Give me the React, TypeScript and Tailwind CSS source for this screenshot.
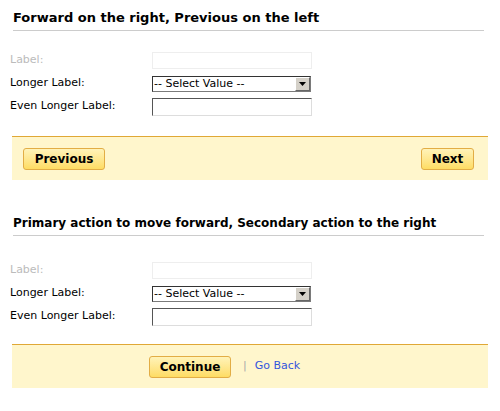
const SelectBox = () => (
  <div className="flex h-[16px] w-[159px] items-stretch border border-[#7a7a7a] border-l-[#333] border-t-[#333] bg-white">
    <span className="flex-1 pl-[1px] text-[11px] leading-[14px] text-black">-- Select Value --</span>
    <span className="flex w-[15px] items-center justify-center border border-[#fff] border-b-[#666] border-r-[#666] bg-[#d4d0c8]">
      <svg width="7" height="4" viewBox="0 0 7 4">
        <path d="M0 0h7L3.5 4z" fill="#000" />
      </svg>
    </span>
  </div>
);

const FormRows = ({ top }: { top: string }) => (
  <div className={`${top} flex flex-col`}>
    <div className="flex h-[23px] items-center">
      <span className="w-[152px] pl-[10px] text-[11px] text-[#bbb]">Label:</span>
      <div className="h-[17px] w-[160px] border border-[#eee] bg-white" />
    </div>
    <div className="flex h-[23px] items-center">
      <span className="w-[152px] pl-[10px] text-[11px] text-black">Longer Label:</span>
      <SelectBox />
    </div>
    <div className="flex h-[23px] items-center">
      <span className="w-[152px] pl-[10px] text-[11px] text-black">Even Longer Label:</span>
      <div className="h-[18px] w-[160px] border border-[#ddd] border-l-[#555] border-t-[#555] bg-white" />
    </div>
  </div>
);

const Btn = ({ children, w }: { children: string; w: string }) => (
  <button
    className={`${w} h-[22px] rounded-[3px] border border-[#e2ad45] bg-gradient-to-b from-[#fff3b8] to-[#fedc62] text-[12px] font-bold leading-none text-black`}
  >
    {children}
  </button>
);

export default function App() {
  return (
    <div className="min-h-[411px] w-[500px] bg-white pt-[11px] font-['DejaVu_Sans',Verdana,sans-serif]">
      <div className="ml-[13px] w-[471px] border-b border-[#ccc] pb-[5px]">
        <h2 className="text-[13px] font-bold leading-[14px] text-black">Forward on the right, Previous on the left</h2>
      </div>
      <FormRows top="mt-[18px]" />
      <div className="mx-[12px] mt-[18px] flex h-[44px] items-center justify-between border-t border-[#e0a836] bg-[#fff6cc] pl-[11px] pr-[14px]">
        <Btn w="w-[82px]">Previous</Btn>
        <Btn w="w-[53px]">Next</Btn>
      </div>

      <div className="ml-[13px] mt-[36px] w-[471px] border-b border-[#ccc] pb-[5px]">
        <h2 className="text-[12px] font-bold leading-[14px] text-black">
          Primary action to move forward, Secondary action to the right
        </h2>
      </div>
      <FormRows top="mt-[23px]" />
      <div className="mx-[12px] mt-[16px] flex h-[44px] items-center border-t border-[#e0a836] bg-[#fff6cc] pl-[137px]">
        <Btn w="w-[82px]">Continue</Btn>
        <span className="ml-[12px] text-[11px] text-[#aaa]">|</span>
        <a href="#" className="ml-[8px] text-[11px] text-[#3355dd]">Go Back</a>
      </div>
    </div>
  );
}
